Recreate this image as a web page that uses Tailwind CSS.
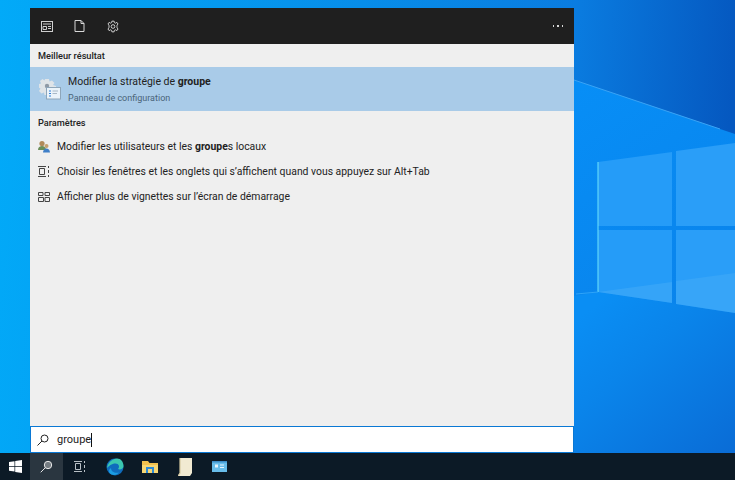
<!doctype html>
<html lang="fr">
<head>
<meta charset="UTF-8">
<title>Recherche</title>
<script src="https://cdn.jsdelivr.net/npm/@tailwindcss/browser@4"></script>
</head>
<body class="overflow-hidden">
<div class="relative w-[735px] h-[480px] overflow-hidden flex flex-col font-['Roboto',sans-serif] text-[#222]">
    <!-- fond d'ecran -->
    <svg class="absolute inset-0" width="735" height="480" viewBox="0 0 735 480">
        <defs>
            <linearGradient id="sky" gradientUnits="userSpaceOnUse" x1="0" y1="0" x2="735" y2="60">
                <stop offset="0" stop-color="#02aaf8"/>
                <stop offset="0.78" stop-color="#0a7ce0"/>
                <stop offset="1" stop-color="#0558c0"/>
            </linearGradient>
            <linearGradient id="low" gradientUnits="userSpaceOnUse" x1="574" y1="90" x2="735" y2="330">
                <stop offset="0" stop-color="#078ef6"/>
                <stop offset="1" stop-color="#0a82ea"/>
            </linearGradient>
            <linearGradient id="floor" gradientUnits="userSpaceOnUse" x1="600" y1="300" x2="735" y2="453">
                <stop offset="0" stop-color="#0a8ef4"/>
                <stop offset="0.35" stop-color="#0a84ea"/>
                <stop offset="1" stop-color="#0a6cd6"/>
            </linearGradient>
        </defs>
        <rect width="735" height="480" fill="url(#sky)"/>
        <path d="M574 80L735 134V340H574Z" fill="url(#low)"/>
        <path d="M574 296L598 292L735 313V480H574Z" fill="url(#floor)"/>
        <path d="M574 80L720 129" stroke="#3aa4f6" stroke-width="1" fill="none"/>
        <path d="M598 162L672 152V226H598Z" fill="#259cf8"/>
        <path d="M676 151L735 143V226H676Z" fill="#2a9ef8"/>
        <path d="M598 230H672V303L598 292Z" fill="#259cf8"/>
        <path d="M676 230H735V313L676 304Z" fill="#2a9ef8"/>
        <path d="M598 292L672 282V303Z" fill="#4ab0f8" opacity="0.45"/>
        <path d="M676 281L735 273V313L676 304Z" fill="#4ab0f8" opacity="0.4"/>
        <path d="M598 162V292" stroke="#6fe4fa" stroke-width="1"/>
        <path d="M576 294L598 292" stroke="#2ea4f8" stroke-width="1"/>
    </svg>

    <div class="relative flex-1 min-h-0 pl-[30px] pt-[8px]">
        <div class="w-[544px] h-[445px] flex flex-col bg-[#efefef]">
            <!-- barre du haut -->
            <div class="h-9 shrink-0 bg-[#1f1f1f] flex items-center pl-[10px] pr-[10px]">
                <div class="w-[14px] flex justify-center">
                    <svg width="12" height="11" viewBox="0 0 12 11" fill="none" stroke="#cfcfcf" stroke-width="1"><rect x="0.5" y="0.5" width="11" height="10"/><path d="M2 3H10M2 5.5H5.5V8.5H2ZM7 5.5H10M7 7.5H10"/></svg>
                </div>
                <div class="ml-[19px] w-[12px] flex justify-center">
                    <svg width="11" height="12" viewBox="0 0 11 12" fill="none" stroke="#d8d8d8" stroke-width="1"><path d="M1 .5H7L10 3.5V11.5H1ZM7 .5V3.5H10"/></svg>
                </div>
                <div class="ml-[22px] w-[12px] flex justify-center">
                    <svg width="13" height="13" viewBox="0 0 13 13" fill="none" stroke="#d8d8d8" stroke-width="1"><circle cx="6.5" cy="6.5" r="2"/><path d="M5.3.7H7.7L8 2.3L9.3 2.9L10.7 2L12 3.9L10.8 5L10.8 6.5L10.8 8L12 9.1L10.7 11L9.3 10.1L8 10.7L7.7 12.3H5.3L5 10.7L3.7 10.1L2.3 11L1 9.1L2.2 8V5L1 3.9L2.3 2L3.7 2.9L5 2.3Z"/></svg>
                </div>
                <div class="ml-auto flex gap-[3px] pr-[1px]">
                    <span class="w-[1.5px] h-[1.5px] bg-[#d8d8d8]"></span>
                    <span class="w-[1.5px] h-[1.5px] bg-[#d8d8d8]"></span>
                    <span class="w-[1.5px] h-[1.5px] bg-[#d8d8d8]"></span>
                </div>
            </div>

            <div class="h-[23px] shrink-0 flex items-center pl-2 text-[9.2px] font-medium">Meilleur résultat</div>

            <div class="h-11 shrink-0 bg-[#a9cbe8] flex items-center">
                <div class="w-[38px] pl-[9px] shrink-0">
                    <svg width="22" height="22" viewBox="0 0 22 22" class="mt-[-1px]">
                        <path d="M6 1H10L10.5 3.5L13 2.5L15.5 5L14 7L17 8V10H7V17H5.5L5 14.5L2.5 15.5L0 13L1.5 10.5L-.5 9.5V6L2 5.5L1 3L3.5 1L5.5 2.5Z" fill="#dfe4e8"/>
                        <circle cx="8" cy="8" r="2.2" fill="#8f9aa6"/>
                        <rect x="7.5" y="9.5" width="14" height="11.5" fill="#eaf3fa" stroke="#8ea6ba" stroke-width="1"/>
                        <path d="M10 13H12M10 15.5H12M10 18H12" stroke="#2f80d8" stroke-width="1.2"/>
                        <path d="M13.5 13H19M13.5 15.5H18" stroke="#a8b8c6" stroke-width="1"/>
                    </svg>
                </div>
                <div class="flex flex-col">
                    <div class="text-[10.5px] leading-[15px]">Modifier la stratégie de <b class="font-bold">groupe</b></div>
                    <div class="mt-[3px] text-[9px] leading-[13px] text-[#4a6478]">Panneau de configuration</div>
                </div>
            </div>

            <div class="h-[23px] shrink-0 flex items-center pl-2 text-[9.2px] font-medium">Paramètres</div>

            <div class="h-[25px] shrink-0 flex items-center pl-[8px] text-[10.4px]">
                <svg class="w-[12px] h-[13px] shrink-0" viewBox="0 0 12 13">
                    <circle cx="4" cy="3.5" r="2.6" fill="#b08a5a"/>
                    <path d="M0 10C0 7 2 6 4 6S8 7 8 10Z" fill="#6b8e5a"/>
                    <circle cx="8.5" cy="6" r="2" fill="#c4a070"/>
                    <path d="M5 12.5C5 10 7 8.5 8.5 8.5S12 10 12 12.5Z" fill="#3f7fc8"/>
                </svg>
                <span class="ml-[7px]">Modifier les utilisateurs et les <b class="font-bold">groupe</b>s locaux</span>
            </div>
            <div class="h-[25px] shrink-0 flex items-center pl-[8px] text-[10.4px]">
                <svg class="w-[12px] h-[11px] shrink-0" viewBox="0 0 12 11" fill="none" stroke="#444" stroke-width="1"><path d="M0 .5H8M0 10.5H8M1.5 2.5H6.5V8.5H1.5ZM10.5 0V2M10.5 4V7M10.5 9V11"/></svg>
                <span class="ml-[7px]">Choisir les fenêtres et les onglets qui s’affichent quand vous appuyez sur Alt+Tab</span>
            </div>
            <div class="h-[25px] shrink-0 flex items-center pl-[8px] text-[10.4px]">
                <svg class="w-[12px] h-[10px] shrink-0" viewBox="0 0 12 10" fill="none" stroke="#444" stroke-width="1"><path d="M.5.5H5V3.5H.5ZM7 .5H11.5V3.5H7ZM.5 5.5H5.5V9.5H.5ZM7 5.5H11.5V9.5H7Z"/></svg>
                <span class="ml-[7px]">Afficher plus de vignettes sur l’écran de démarrage</span>
            </div>

            <div class="flex-1"></div>

            <!-- recherche -->
            <div class="h-[27px] shrink-0 bg-white border-[1.5px] border-[#0a78d4] flex items-center pl-[6px]">
                <svg class="w-[12px] h-[12px] shrink-0" viewBox="0 0 12 12" fill="none" stroke="#222" stroke-width="1"><circle cx="7.5" cy="4.5" r="3.5"/><path d="M5 7L.5 11.5"/></svg>
                <span class="ml-[8px] text-[11px] mt-[2px]">groupe</span>
                <span class="w-px h-[14px] bg-[#111]"></span>
            </div>
        </div>
    </div>

    <!-- barre des taches -->
    <div class="relative h-[27px] shrink-0 bg-[#0c1a26] flex items-center">
        <div class="w-[30px] flex justify-center">
            <svg width="13" height="13" viewBox="0 0 13 13" fill="#fff"><path d="M0 2L5.5 1.2V6H0ZM6.2 1.1L13 0V6H6.2ZM0 6.8H5.5V11.6L0 10.8ZM6.2 6.8H13V13L6.2 11.9Z"/></svg>
        </div>
        <div class="w-[33px] h-full bg-[#2a3640] flex items-center justify-center">
            <svg width="13" height="13" viewBox="0 0 13 13" fill="none" stroke="#e8e8e8" stroke-width="1"><circle cx="8" cy="5" r="3.7" fill="#fff" fill-opacity="0.35"/><path d="M5.3 7.7L.7 12.3"/></svg>
        </div>
        <div class="w-[34px] flex justify-center">
            <svg width="12" height="11" viewBox="0 0 12 11" fill="none" stroke="#b8c0c6" stroke-width="1"><path d="M0 .5H8M0 10.5H8M1.5 2.5H6.5V8.5H1.5ZM10.5 0V2M10.5 4V7M10.5 9V11"/></svg>
        </div>
        <div class="w-[35px] flex justify-center">
            <svg width="18" height="18" viewBox="0 0 18 18">
                <circle cx="9" cy="9" r="8.5" fill="#0f6cbd"/>
                <path d="M1 10C2 4 7 .5 11 .5C15 .5 17.5 4 17.5 8C17.5 11 14 12 12 11C14 9 13 5.5 9.5 5.5C5.5 5.5 3 8 1 10Z" fill="#3bc7b0"/>
                <path d="M5 10C5 14 9 15.5 13 14.5C11 17 7 18 4 15.5C2.5 14 2.5 11.5 5 10Z" fill="#1b9de2"/>
            </svg>
        </div>
        <div class="w-[35px] flex justify-center">
            <svg width="16" height="14" viewBox="0 0 16 14"><path d="M0 1H6L7.5 3H16V13H0Z" fill="#f2c14e"/><rect x="0" y="5" width="16" height="8" fill="#f7d774"/><rect x="4" y="7" width="8" height="6" fill="#2d8bd6"/><rect x="6" y="9" width="4" height="4" fill="#f7d774"/></svg>
        </div>
        <div class="w-[35px] flex justify-center">
            <svg width="14" height="18" viewBox="0 0 14 18"><path d="M2 0H14V15L12 18H0L2 15Z" fill="#f1ead2"/><path d="M2 0V15L0 18" fill="none" stroke="#d6c9a0" stroke-width="1.2"/></svg>
        </div>
        <div class="w-[35px] flex justify-center">
            <svg width="15" height="11" viewBox="0 0 15 11"><rect width="15" height="11" fill="#68bdea"/><rect y="0" width="15" height="1.5" fill="#3b8dc8"/><rect x="3" y="3.5" width="3" height="3" fill="#e8f4fb"/><rect x="8" y="3.5" width="4" height="1" fill="#e8f4fb"/><rect x="8" y="6" width="4" height="1" fill="#e8f4fb"/></svg>
        </div>
    </div>
</div>
</body>
</html>
